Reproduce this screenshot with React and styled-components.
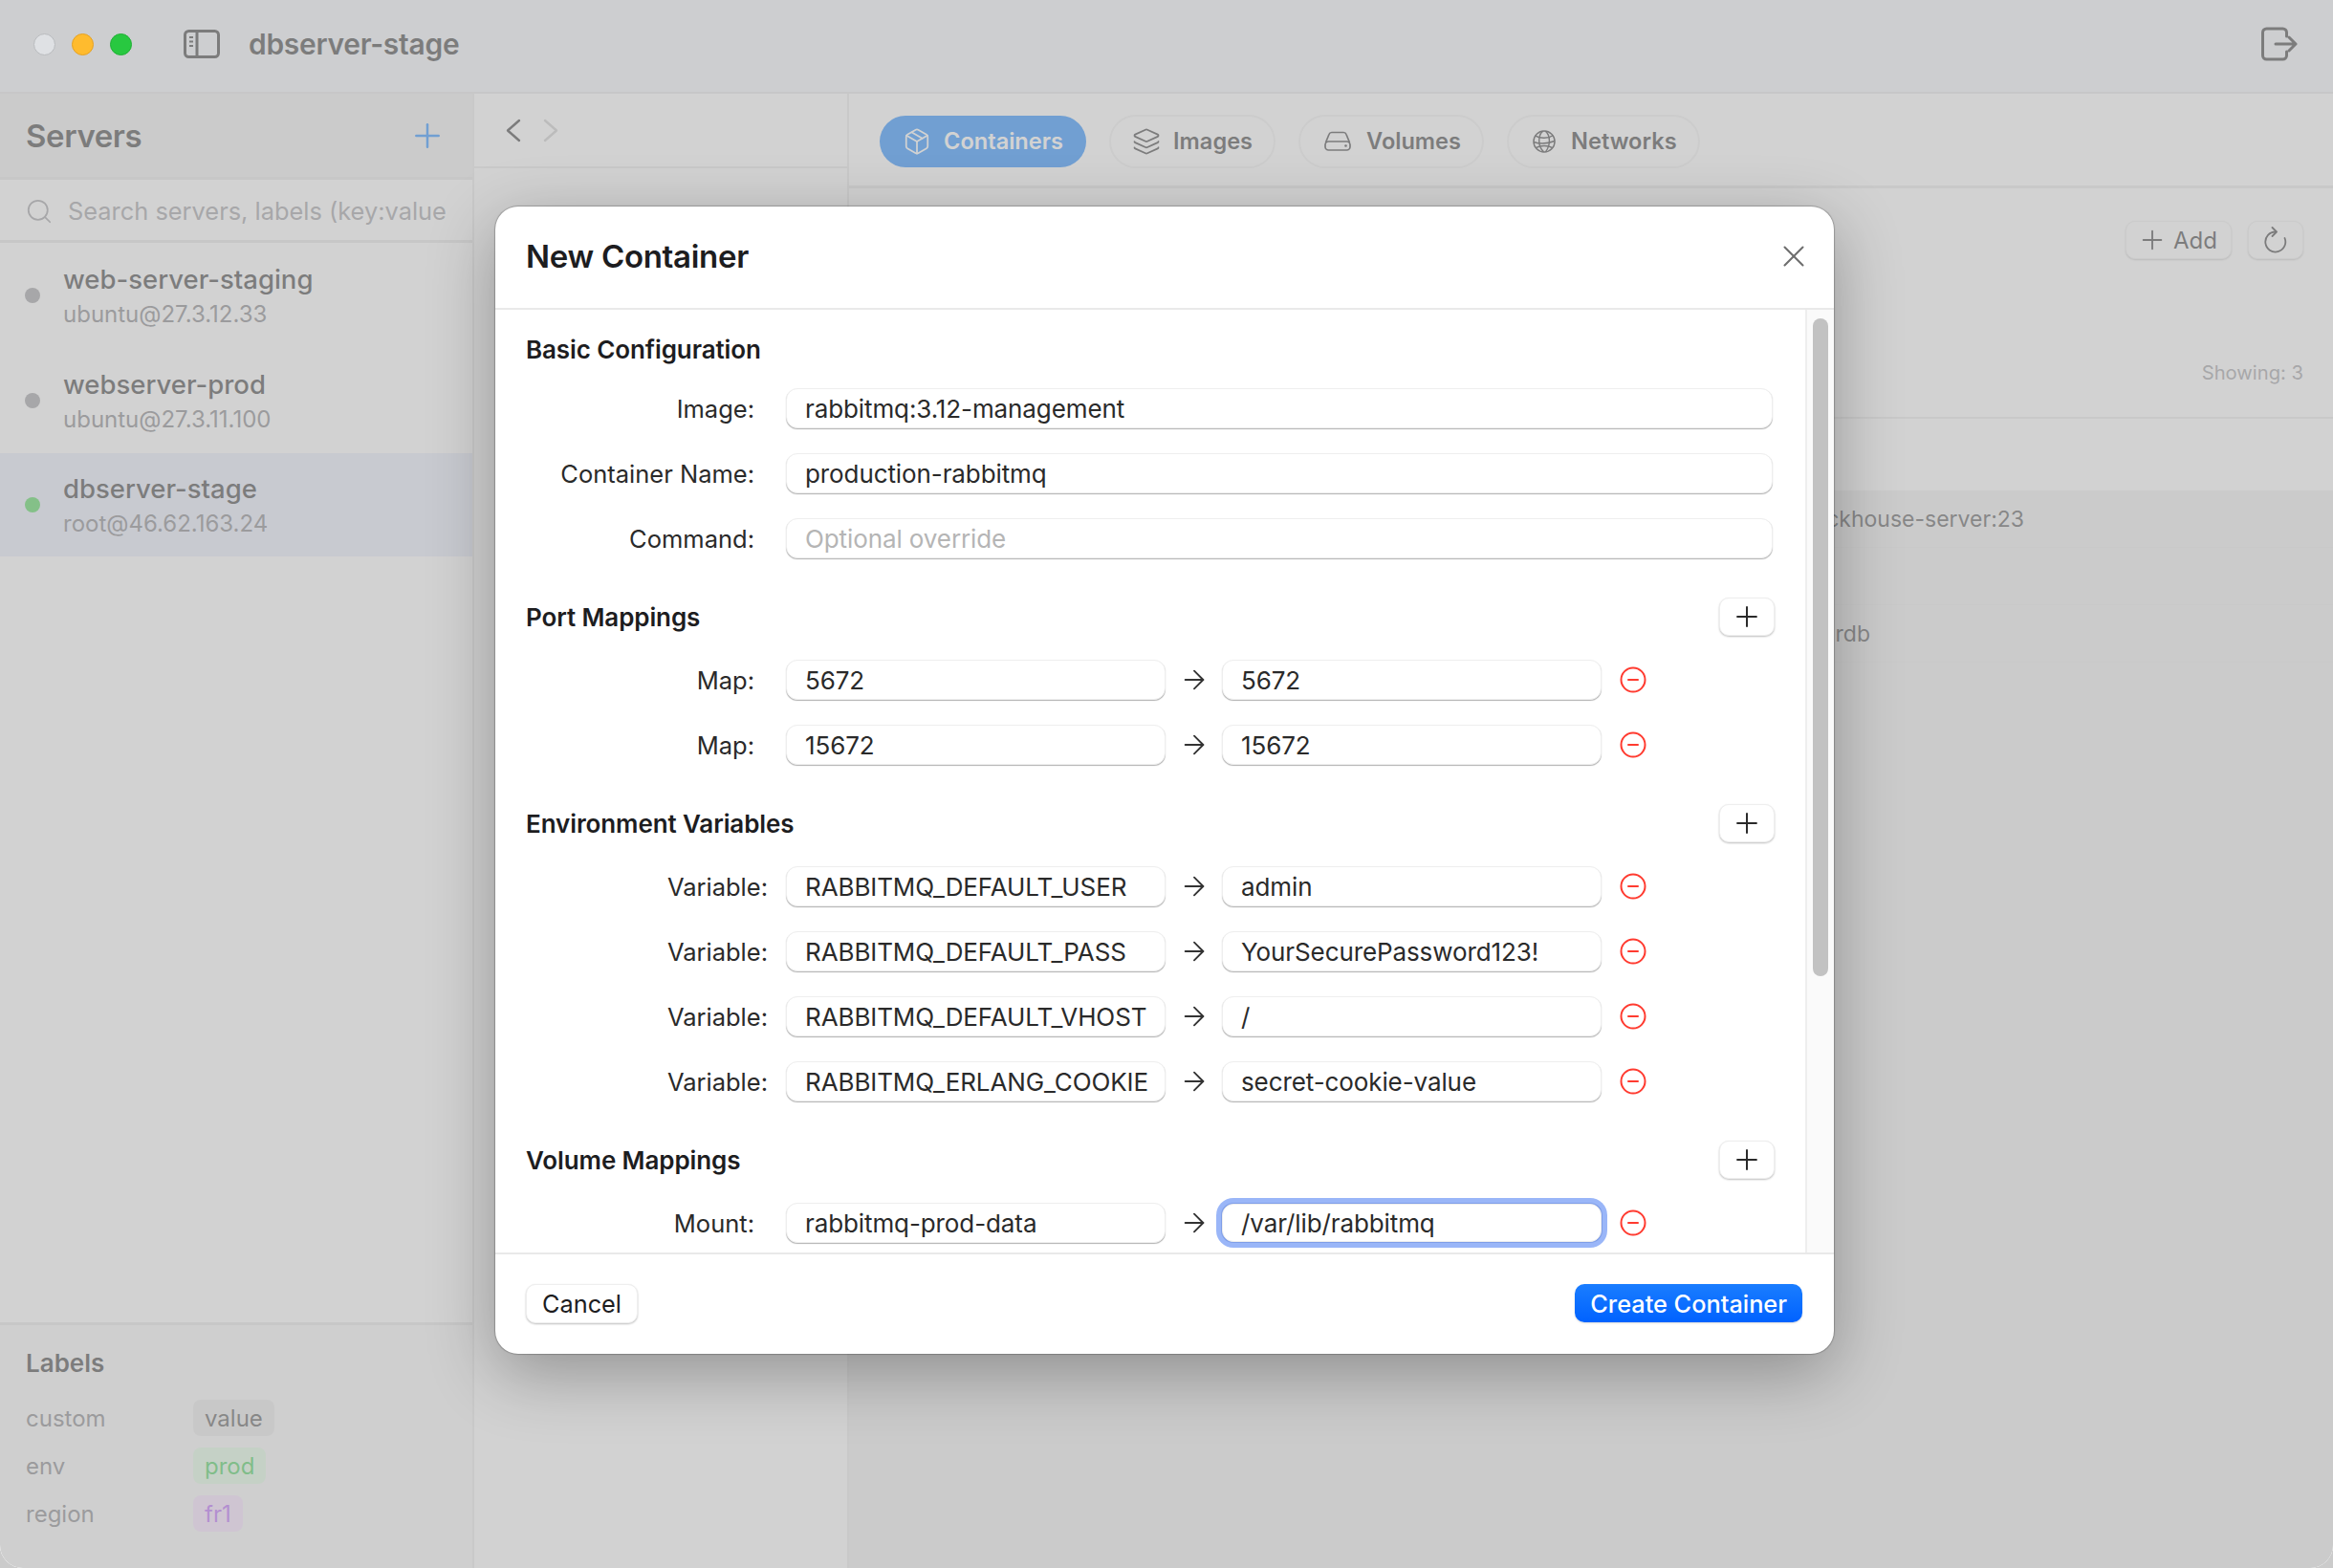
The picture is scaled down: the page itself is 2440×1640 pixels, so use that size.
import React from "react";
import styled, { createGlobalStyle, css } from "styled-components";
import { ArrowRight, CircleMinus, Layers, Package, Plus, Search, X } from "lucide-react";

const GlobalStyle = createGlobalStyle`
  html, body {
    margin: 0;
    width: 2440px;
    height: 1640px;
    overflow: hidden;
    background: #cbcbcb;
    font-family: Inter, "Liberation Sans", sans-serif;
    color: #1d1d1f;
  }
  * { box-sizing: border-box; }
`;

const Window = styled.div`
  position: relative;
  width: 2440px;
  height: 1640px;
  display: flex;
  flex-direction: column;
  overflow: hidden;
  background: #fff;
  border-radius: 0 0 24px 24px;
`;

const TitleBar = styled.header`
  height: 98px;
  flex: none;
  display: flex;
  align-items: center;
  padding: 0 37px 5px 192px;
  background: #f2f5fa;
  border-bottom: 2px solid #e2e2e4;
`;

const Lights = styled.div`
  position: absolute;
  z-index: 3;
  left: 35px;
  top: 35px;
  display: flex;
  gap: 17px;
`;

const Light = styled.span`
  width: 23px;
  height: 23px;
  border-radius: 50%;
  background: ${(p) => p.$color};
  border: 1px solid ${(p) => p.$edge};
`;

const TitleText = styled.div`
  margin-left: 30px;
  flex: 1;
  font-size: 30px;
  font-weight: 600;
  letter-spacing: -0.3px;
`;

const Body = styled.div`
  flex: 1;
  display: grid;
  grid-template-columns: 496px 392px 1fr;
  min-height: 0;
`;

const Sidebar = styled.aside`
  display: flex;
  flex-direction: column;
  background: #fff;
  border-right: 2px solid #e6e6e6;
`;

const SideHead = styled.div`
  height: 90px;
  flex: none;
  display: flex;
  align-items: center;
  justify-content: space-between;
  padding: 0 27px 0 27px;
  background: #ededed;
  border-bottom: 3px solid #e2e2e2;
`;

const SideTitle = styled.div`
  font-size: 33px;
  font-weight: 600;
  letter-spacing: -0.4px;
`;

const SearchBox = styled.div`
  height: 66px;
  flex: none;
  display: flex;
  align-items: center;
  gap: 15px;
  padding: 2px 0 0 26px;
  color: #8e8e93;
  font-size: 25.4px;
  white-space: nowrap;
  overflow: hidden;
  border-bottom: 3px solid #e2e2e2;
`;

const ServerRow = styled.div`
  height: ${(p) => (p.$active ? 108 : 110)}px;
  flex: none;
  display: flex;
  align-items: center;
  gap: 24px;
  padding-left: 26px;
  background: ${(p) => (p.$active ? "#e5eafa" : "transparent")};
`;

const Dot = styled.span`
  width: 16px;
  height: 16px;
  border-radius: 50%;
  flex: none;
  background: ${(p) => (p.$on ? "#34d03d" : "#8e8e93")};
`;

const ServerText = styled.div`
  margin-top: 3px;
`;

const ServerName = styled.div`
  font-size: 27.5px;
  font-weight: 500;
  line-height: 37px;
`;

const ServerHost = styled.div`
  font-size: 24px;
  line-height: 36px;
  color: #6e6e73;
`;

const Labels = styled.section`
  margin-top: auto;
  height: 257px;
  flex: none;
  padding: 22px 27px 0;
  background: #f7f7f7;
  border-top: 3px solid #e2e2e2;
`;

const LabelsTitle = styled.div`
  font-size: 26px;
  font-weight: 600;
  line-height: 36px;
  margin-bottom: 20px;
`;

const LabelRow = styled.div`
  height: 38px;
  margin-bottom: 12px;
  display: flex;
  align-items: center;
`;

const LabelKey = styled.span`
  width: 175px;
  font-size: 24px;
  color: #6e6e73;
`;

const Chip = styled.span`
  height: 38px;
  display: flex;
  align-items: center;
  padding: 0 12px;
  border-radius: 8px;
  font-size: 24px;
  background: ${(p) => p.$bg};
  color: ${(p) => p.$fg};
`;

const Middle = styled.div`
  background: #fff;
  border-right: 2px solid #e6e6e6;
`;

const NavBar = styled.div`
  height: 78px;
  display: flex;
  align-items: center;
  gap: 23px;
  padding: 0 0 0 33px;
  border-bottom: 2px solid #e6e6e6;
`;

const NavButton = styled.span`
  display: flex;
  color: ${(p) => (p.$off ? "#c4c4c4" : "#1d1d1f")};
`;

const Main = styled.main`
  display: flex;
  flex-direction: column;
  background: #fff;
`;

const TabBar = styled.nav`
  height: 99px;
  flex: none;
  display: flex;
  align-items: center;
  gap: 24px;
  padding: 3px 0 0 32px;
  border-bottom: 3px solid #e6e6e6;
`;

const Tab = styled.div`
  height: ${(p) => (p.$active ? 54 : 56)}px;
  display: flex;
  align-items: center;
  gap: 16px;
  border-radius: 28px;
  font-size: 23.6px;
  font-weight: 600;
  .lucide {
    margin: 0 -3px;
  }
  ${(p) =>
    p.$active
      ? css`
          padding: 0 24px 0 27px;
          background: #007aff;
          color: #fff;
        `
      : css`
          padding: 0 22px 0 25px;
          border: 2px solid #efefef;
        `}
`;

const ActionBar = styled.div`
  height: 239px;
  flex: none;
  display: flex;
  flex-direction: column;
  align-items: flex-end;
  padding: 34px 31px 0 0;
`;

const ActionButtons = styled.div`
  display: flex;
  gap: 17px;
`;

const GhostButton = styled.div`
  height: 40px;
  display: flex;
  align-items: center;
  gap: 6px;
  padding: ${(p) => (p.$icon ? "0 16px" : "0 14px 0 11px")};
  font-size: 24px;
  border-radius: 10px;
  background: #fff;
  border: 1px solid #ececec;
  box-shadow: 0 1px 2px rgba(0, 0, 0, 0.25);
`;

const Showing = styled.div`
  margin-top: 106px;
  font-size: 20.2px;
  color: #8e8e93;
`;

const TableHead = styled.div`
  height: 77px;
  flex: none;
  border-top: 2px solid #e6e6e6;
`;

const TableBody = styled.div`
  flex: 1;
  background: #eceded;
`;

const TableRow = styled.div`
  height: 60px;
  display: flex;
  align-items: center;
  border-bottom: 1px solid #e6e6e6;
  font-size: 23px;
  color: #3a3a3c;
`;

const ImageCell = styled.div`
  width: ${(p) => p.$end}px;
  text-align: right;
  white-space: nowrap;
`;

const Overlay = styled.div`
  position: absolute;
  z-index: 2;
  inset: 0;
  display: flex;
  align-items: center;
  justify-content: center;
  padding: 0 4px 8px 0;
  background: rgba(182, 182, 182, 0.62);
`;

const Modal = styled.div`
  width: 1400px;
  height: 1200px;
  display: flex;
  flex-direction: column;
  overflow: hidden;
  background: #fff;
  border-radius: 24px;
  box-shadow: 0 20px 70px rgba(0, 0, 0, 0.3), 0 0 1px 1px rgba(0, 0, 0, 0.22);
`;

const ModalHead = styled.div`
  height: 108px;
  flex: none;
  display: flex;
  align-items: center;
  justify-content: space-between;
  padding: 0 23px 2px 32px;
  border-bottom: 2px solid #e9e9e9;
`;

const ModalTitle = styled.h2`
  margin: 0;
  font-size: 33px;
  font-weight: 600;
  letter-spacing: -0.3px;
`;

const CloseIcon = styled.span`
  display: flex;
  color: #6e6e6e;
`;

const ModalMiddle = styled.div`
  flex: 1;
  min-height: 0;
  display: flex;
`;

const Form = styled.div`
  flex: 1;
  overflow: hidden;
  padding: 21px 32px 0;
`;

const Gutter = styled.div`
  width: 30px;
  flex: none;
  padding: 9px 6px 0 6px;
  background: #fafafa;
  border-left: 2px solid #eeeeee;
`;

const Thumb = styled.div`
  height: 688px;
  border-radius: 8px;
  background: #c2c2c2;
`;

const Section = styled.section`
  margin-bottom: 41px;
`;

const SectionHead = styled.div`
  height: 40px;
  display: flex;
  align-items: center;
  justify-content: space-between;
  margin-bottom: ${(p) => (p.$tight ? 21 : 25)}px;
`;

const SectionTitle = styled.div`
  font-size: 26px;
  font-weight: 600;
  letter-spacing: -0.1px;
`;

const SquareButton = styled.button`
  width: 58px;
  height: 40px;
  display: flex;
  align-items: center;
  justify-content: center;
  padding: 0;
  border-radius: 10px;
  background: #fff;
  color: #2a2a2a;
  border: 1px solid #eeeeee;
  box-shadow: 0 1px 2px rgba(0, 0, 0, 0.25);
`;

const FieldRow = styled.div`
  height: 42px;
  display: flex;
  align-items: center;
  margin-bottom: 26px;
`;

const FieldLabel = styled.label`
  width: ${(p) => (p.$wide ? 253 : 239)}px;
  margin-right: ${(p) => (p.$wide ? 19 : 33)}px;
  flex: none;
  text-align: right;
  font-size: 25.5px;
  color: #2a2a2a;
`;

const Input = styled.input`
  ${(p) =>
    p.$pair
      ? css`
          width: 397px;
          flex: none;
        `
      : css`
          flex: 1;
          min-width: 0;
          margin-right: 2px;
        `}
  height: 42px;
  padding: 0 0 0 19px;
  font-family: inherit;
  font-size: 26px;
  letter-spacing: -0.1px;
  color: #2a2a2a;
  background: #fff;
  border-radius: 12px;
  border: 1px solid #eeeeee;
  box-shadow: 0 1px 1px rgba(0, 0, 0, 0.3);
  outline: none;
  &::placeholder {
    color: #b5b5b5;
  }
  ${(p) =>
    p.$focused &&
    css`
      height: 40px;
      box-shadow: 0 0 0 1px #7f9ee8, 0 0 0 6px #9ab6f8;
    `}
`;

const ArrowBox = styled.span`
  width: 59px;
  flex: none;
  display: flex;
  justify-content: center;
  color: #333;
`;

const RemoveIcon = styled.span`
  margin-left: 18px;
  display: flex;
  color: #ff3b30;
`;

const ModalFoot = styled.div`
  height: 106px;
  flex: none;
  display: flex;
  align-items: flex-start;
  justify-content: space-between;
  padding: 31px 33px 0 32px;
  border-top: 2px solid #e9e9e9;
`;

const CancelButton = styled.button`
  height: 41px;
  padding: 0 16px;
  font-family: inherit;
  font-size: 25.3px;
  color: #1d1d1f;
  background: #fff;
  border-radius: 10px;
  border: 1px solid #eeeeee;
  box-shadow: 0 1px 2px rgba(0, 0, 0, 0.25);
`;

const PrimaryButton = styled.button`
  height: 40px;
  padding: 0 16px;
  font-family: inherit;
  font-size: 25.3px;
  font-weight: 500;
  color: #fff;
  background: linear-gradient(#1a7dff, #0062ff);
  border: none;
  border-radius: 10px;
  box-shadow: 0 1px 2px rgba(0, 0, 0, 0.15);
`;

function SidebarIcon() {
  return (
    <svg width="38" height="30" viewBox="0 0 38 30" fill="none" stroke="#1d1d1f" strokeWidth="3">
      <rect x="1.5" y="1.5" width="35" height="27" rx="4" />
      <path d="M14 2v26" />
      <path d="M6 8h4M6 12.5h4M6 17h4" strokeWidth="2" />
    </svg>
  );
}

function ExitIcon() {
  return (
    <svg width="38" height="36" viewBox="0 0 38 36" fill="none" stroke="#1d1d1f" strokeWidth="3" strokeLinecap="round">
      <path d="M26.5 10V6a4 4 0 0 0-4-4H5.500a4 4 0 0 0-4 4v24a4 4 0 0 0 4 4h17a4 4 0 0 0 4-4v-4" />
      <path d="M15 18h21M29 11l7 7-7 7" strokeLinejoin="round" />
    </svg>
  );
}

function Chevron({ right }) {
  return (
    <svg width="16" height="25" viewBox="0 0 16 25" fill="none" stroke="currentColor" strokeWidth="2.400" strokeLinecap="round" strokeLinejoin="round">
      <path d={right ? "M2 2l12 10.500L2 23" : "M14 2L2 12.500 14 23"} />
    </svg>
  );
}

function DriveIcon() {
  return (
    <svg width="28" height="21" viewBox="0 0 28 21" fill="none" stroke="currentColor" strokeWidth="1.700">
      <path d="M1.500 12 5 3.500A3 3 0 0 1 7.800 1.500h12.400A3 3 0 0 1 23 3.500L26.500 12" />
      <rect x="1" y="11" width="26" height="9" rx="3.500" />
      <circle cx="22.500" cy="15.500" r="1.300" fill="currentColor" stroke="none" />
    </svg>
  );
}

function GlobeIcon() {
  return (
    <svg width="24" height="24" viewBox="0 0 25 25" fill="none" stroke="currentColor" strokeWidth="1.500">
      <circle cx="12.500" cy="12.500" r="11.500" />
      <path d="M11 1.200C5.500 6 5.500 18 12 23.800M14 1.200c5 4.500 6 15 0 22.600" />
      <path d="M3 6.500c5 3 14 3 19-.5M1 13c7 2.500 15 2 23-1M3.500 19.500c5-3 13-3 18 0" />
    </svg>
  );
}

function ReloadIcon() {
  return (
    <svg width="24" height="28" viewBox="0 0 24 28" fill="none" stroke="currentColor" strokeWidth="1.800" strokeLinecap="round" strokeLinejoin="round">
      <path d="M12 5.500A10.500 10.500 0 1 0 21.500 12" />
      <path d="M8.500 1L13 5.500 8.500 10" />
    </svg>
  );
}

const servers = [
  { name: "web-server-staging", host: "ubuntu@27.3.12.33" },
  { name: "webserver-prod", host: "ubuntu@27.3.11.100" },
  { name: "dbserver-stage", host: "root@46.62.163.24", active: true },
];

const labels = [
  { key: "custom", value: "value", bg: "#e5e5e5", fg: "#3c3c3c" },
  { key: "env", value: "prod", bg: "#ddfbe0", fg: "#28c840" },
  { key: "region", value: "fr1", bg: "#f8ddff", fg: "#ae4ffa" },
];

const ports = [
  ["5672", "5672"],
  ["15672", "15672"],
];

const envs = [
  ["RABBITMQ_DEFAULT_USER", "admin"],
  ["RABBITMQ_DEFAULT_PASS", "YourSecurePassword123!"],
  ["RABBITMQ_DEFAULT_VHOST", "/"],
  ["RABBITMQ_ERLANG_COOKIE", "secret-cookie-value"],
];

function PairRow({ label, wide, left, right, focused }) {
  return (
    <FieldRow>
      <FieldLabel $wide={wide}>{label}</FieldLabel>
      <Input $pair readOnly value={left} />
      <ArrowBox>
        <ArrowRight size={32} strokeWidth={1.4} />
      </ArrowBox>
      <Input $pair $focused={focused} readOnly value={right} />
      <RemoveIcon>
        <CircleMinus size={30} strokeWidth={1.6} />
      </RemoveIcon>
    </FieldRow>
  );
}

function SectionHeader({ title }) {
  return (
    <SectionHead>
      <SectionTitle>{title}</SectionTitle>
      <SquareButton>
        <Plus size={34} strokeWidth={1.4} />
      </SquareButton>
    </SectionHead>
  );
}

export default function App() {
  return (
    <Window>
      <GlobalStyle />
      <Lights>
        <Light $color="#dfe1e4" $edge="#b9bbbe" />
        <Light $color="#ffbb2e" $edge="#e5a123" />
        <Light $color="#28c840" $edge="#20b035" />
      </Lights>

      <TitleBar>
        <SidebarIcon />
        <TitleText>dbserver-stage</TitleText>
        <ExitIcon />
      </TitleBar>

      <Body>
        <Sidebar>
          <SideHead>
            <SideTitle>Servers</SideTitle>
            <Plus size={40} strokeWidth={1.5} color="#007aff" />
          </SideHead>
          <SearchBox>
            <Search size={30} strokeWidth={1.4} />
            Search servers, labels (key:value
          </SearchBox>
          {servers.map((s) => (
            <ServerRow key={s.name} $active={s.active}>
              <Dot $on={s.active} />
              <ServerText>
                <ServerName>{s.name}</ServerName>
                <ServerHost>{s.host}</ServerHost>
              </ServerText>
            </ServerRow>
          ))}
          <Labels>
            <LabelsTitle>Labels</LabelsTitle>
            {labels.map((l) => (
              <LabelRow key={l.key}>
                <LabelKey>{l.key}</LabelKey>
                <Chip $bg={l.bg} $fg={l.fg}>
                  {l.value}
                </Chip>
              </LabelRow>
            ))}
          </Labels>
        </Sidebar>

        <Middle>
          <NavBar>
            <NavButton>
              <Chevron />
            </NavButton>
            <NavButton $off>
              <Chevron right />
            </NavButton>
          </NavBar>
        </Middle>

        <Main>
          <TabBar>
            <Tab $active>
              <Package size={30} strokeWidth={1.4} />
              Containers
            </Tab>
            <Tab>
              <Layers size={30} strokeWidth={1.4} />
              Images
            </Tab>
            <Tab>
              <DriveIcon />
              Volumes
            </Tab>
            <Tab>
              <GlobeIcon />
              Networks
            </Tab>
          </TabBar>
          <ActionBar>
            <ActionButtons>
              <GhostButton>
                <Plus size={32} strokeWidth={1.4} />
                Add
              </GhostButton>
              <GhostButton $icon>
                <ReloadIcon />
              </GhostButton>
            </ActionButtons>
            <Showing>Showing: 3</Showing>
          </ActionBar>
          <TableHead />
          <TableBody>
            <TableRow>
              <ImageCell $end={1229}>clickhouse/clickhouse-server:23</ImageCell>
            </TableRow>
            <TableRow />
            <TableRow>
              <ImageCell $end={1068}>rdb</ImageCell>
            </TableRow>
          </TableBody>
        </Main>
      </Body>

      <Overlay>
        <Modal>
          <ModalHead>
            <ModalTitle>New Container</ModalTitle>
            <CloseIcon>
              <X size={38} strokeWidth={1.3} />
            </CloseIcon>
          </ModalHead>

          <ModalMiddle>
            <Form>
              <Section>
                <SectionHead $tight>
                  <SectionTitle>Basic Configuration</SectionTitle>
                </SectionHead>
                <FieldRow>
                  <FieldLabel>Image:</FieldLabel>
                  <Input readOnly value="rabbitmq:3.12-management" />
                </FieldRow>
                <FieldRow>
                  <FieldLabel>Container Name:</FieldLabel>
                  <Input readOnly value="production-rabbitmq" />
                </FieldRow>
                <FieldRow>
                  <FieldLabel>Command:</FieldLabel>
                  <Input readOnly placeholder="Optional override" />
                </FieldRow>
              </Section>

              <Section>
                <SectionHeader title="Port Mappings" />
                {ports.map(([left, right]) => (
                  <PairRow key={left} label="Map:" left={left} right={right} />
                ))}
              </Section>

              <Section>
                <SectionHeader title="Environment Variables" />
                {envs.map(([left, right]) => (
                  <PairRow key={left} wide label="Variable:" left={left} right={right} />
                ))}
              </Section>

              <Section>
                <SectionHeader title="Volume Mappings" />
                <PairRow label="Mount:" left="rabbitmq-prod-data" right="/var/lib/rabbitmq" focused />
              </Section>
            </Form>
            <Gutter>
              <Thumb />
            </Gutter>
          </ModalMiddle>

          <ModalFoot>
            <CancelButton>Cancel</CancelButton>
            <PrimaryButton>Create Container</PrimaryButton>
          </ModalFoot>
        </Modal>
      </Overlay>
    </Window>
  );
}
